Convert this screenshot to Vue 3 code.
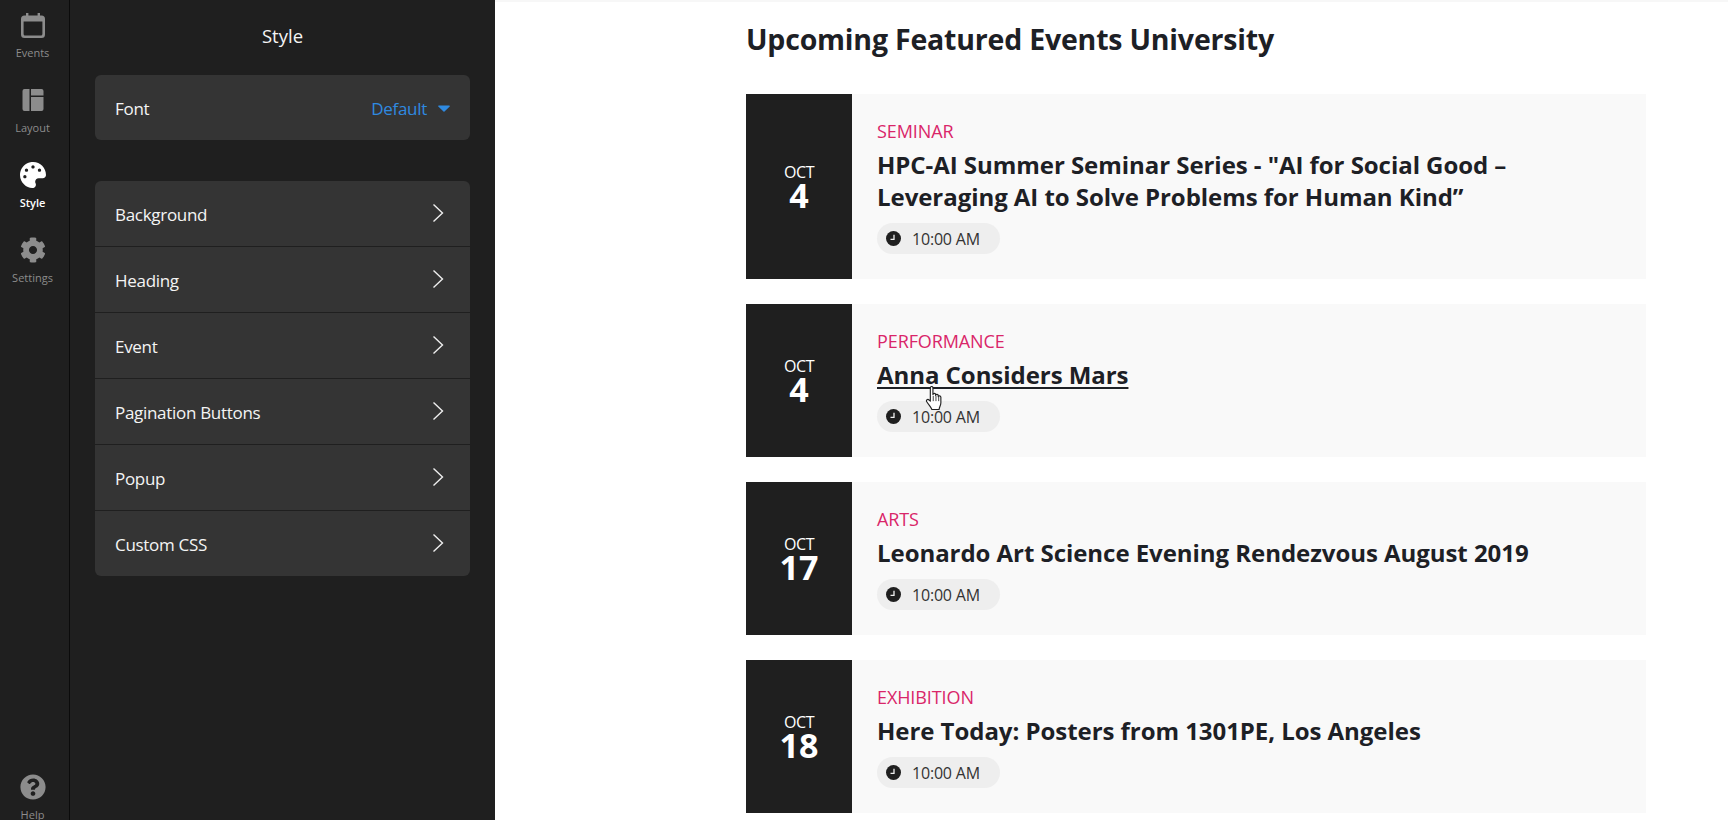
<script setup>
const rail = [
  { label: 'Events', icon: 'cal' },
  { label: 'Layout', icon: 'layout' },
  { label: 'Style', icon: 'palette', active: true },
  { label: 'Settings', icon: 'gear' }
]
const rows = ['Background', 'Heading', 'Event', 'Pagination Buttons', 'Popup', 'Custom CSS']
const events = [
  { cat: 'SEMINAR', day: '4', title: 'HPC-AI Summer Seminar Series - "AI for Social Good – Leveraging AI to Solve Problems for Human Kind”' },
  { cat: 'PERFORMANCE', day: '4', title: 'Anna Considers Mars', hover: true },
  { cat: 'ARTS', day: '17', title: 'Leonardo Art Science Evening Rendezvous August 2019' },
  { cat: 'EXHIBITION', day: '18', title: 'Here Today: Posters from 1301PE, Los Angeles' }
]
</script>

<template>
  <div class="app">
    <nav class="rail">
      <div v-for="r in rail" :key="r.label" class="rail-item" :class="{ active: r.active }">
        <svg v-if="r.icon === 'cal'" class="ri" viewBox="0 0 26 26">
          <path fill="currentColor" fill-rule="evenodd" d="M6 1h2.400v2.400h9.200V1H20v2.400h1.500A3.500 3.500 0 0 1 25 6.900v15.600a3.500 3.500 0 0 1-3.500 3.500h-17A3.500 3.500 0 0 1 1 22.500V6.900a3.500 3.500 0 0 1 3.500-3.500H6zM3.600 9.500v12.400c0 .8.600 1.500 1.400 1.500h16c.8 0 1.400-.7 1.400-1.500V9.500z" />
        </svg>
        <svg v-else-if="r.icon === 'layout'" class="ri" viewBox="0 0 26 26">
          <path fill="currentColor" d="M4.500 2H9.500V24H4.500A2 2 0 0 1 2.500 22V4A2 2 0 0 1 4.500 2zM11 2H21.500A2 2 0 0 1 23.500 4V8.500H11zM11 10H23.500V22A2 2 0 0 1 21.500 24H11z" />
        </svg>
        <svg v-else-if="r.icon === 'palette'" class="ri" viewBox="0 0 512 512">
          <path fill="currentColor" d="M204.300 5C104.900 24.400 24.800 104.300 5.200 203.400c-37 187 131.700 326.400 258.800 306.700 41.200-6.400 61.400-54.600 42.500-91.700-23.100-45.400 9.900-98.400 60.900-98.400h79.700c35.800 0 64.800-29.600 64.900-65.300C511.500 97.100 368.100-26.900 204.300 5zM96 320c-17.700 0-32-14.300-32-32s14.300-32 32-32 32 14.300 32 32-14.300 32-32 32zm32-128c-17.700 0-32-14.300-32-32s14.300-32 32-32 32 14.300 32 32-14.300 32-32 32zm128-64c-17.700 0-32-14.300-32-32s14.300-32 32-32 32 14.300 32 32-14.300 32-32 32zm128 64c-17.700 0-32-14.300-32-32s14.300-32 32-32 32 14.300 32 32-14.300 32-32 32z" />
        </svg>
        <svg v-else class="ri" viewBox="0 0 512 512">
          <path fill="currentColor" d="M487.400 315.700l-42.600-24.600c4.300-23.200 4.300-47 0-70.200l42.600-24.600c4.900-2.800 7.100-8.600 5.500-14-11.100-35.600-30-67.800-54.700-94.600-3.800-4.100-10-5.100-14.800-2.300L380.800 110c-17.900-15.400-38.500-27.300-60.800-35.100V25.800c0-5.600-3.900-10.500-9.400-11.700-36.700-8.200-74.300-7.800-109.200 0-5.500 1.200-9.400 6.100-9.400 11.700V75c-22.200 7.900-42.800 19.800-60.800 35.100L88.700 85.500c-4.900-2.800-11-1.900-14.800 2.300-24.700 26.700-43.600 58.900-54.700 94.600-1.700 5.400.6 11.200 5.500 14L67.300 221c-4.300 23.200-4.300 47 0 70.200l-42.600 24.600c-4.900 2.800-7.100 8.600-5.500 14 11.100 35.600 30 67.800 54.700 94.600 3.800 4.100 10 5.100 14.800 2.300l42.600-24.600c17.900 15.400 38.500 27.300 60.800 35.100v49.200c0 5.600 3.900 10.500 9.400 11.700 36.700 8.200 74.300 7.800 109.200 0 5.500-1.200 9.400-6.100 9.400-11.700v-49.200c22.200-7.900 42.800-19.800 60.800-35.100l42.600 24.600c4.900 2.800 11 1.900 14.800-2.300 24.700-26.700 43.600-58.900 54.700-94.600 1.500-5.500-.7-11.300-5.600-14.100zM256 336c-44.100 0-80-35.900-80-80s35.900-80 80-80 80 35.900 80 80-35.900 80-80 80z" />
        </svg>
        <span class="rl">{{ r.label }}</span>
      </div>
      <div class="rail-item help">
        <svg class="ri" viewBox="0 0 512 512">
          <path fill="currentColor" d="M504 256c0 136.997-111.043 248-248 248S8 392.997 8 256C8 119.083 119.043 8 256 8s248 111.083 248 248zM262.655 90c-54.497 0-89.255 22.957-116.549 63.758-3.536 5.286-2.353 12.415 2.715 16.258l34.699 26.310c5.205 3.947 12.621 3.008 16.665-2.122 17.864-22.658 30.113-35.797 57.303-35.797 20.429 0 45.698 13.148 45.698 32.958 0 14.976-12.363 22.667-32.534 33.976C247.128 238.528 216 254.941 216 296v4c0 6.627 5.373 12 12 12h56c6.627 0 12-5.373 12-12v-1.333c0-28.462 83.186-29.647 83.186-106.667 0-58.002-60.165-102-116.531-102zM256 338c-25.365 0-46 20.635-46 46 0 25.364 20.635 46 46 46s46-20.636 46-46c0-25.365-20.635-46-46-46z" />
        </svg>
        <span class="rl">Help</span>
      </div>
    </nav>

    <aside class="panel">
      <h2 class="panel-title">Style</h2>
      <div class="group">
        <div class="row">
          <span>Font</span>
          <span class="font-val">Default
            <svg class="caret" viewBox="0 0 12 7"><path fill="currentColor" d="M.8.500h10.400c.6 0 .9.700.5 1.100L6.500 6.500a.7.700 0 0 1-1 0L.3 1.600C-.1 1.200.2.500.8.500z" /></svg>
          </span>
        </div>
      </div>
      <div class="group second">
        <div v-for="r in rows" :key="r" class="row divided">
          <span>{{ r }}</span>
          <svg class="chev" viewBox="0 0 12 20"><path d="M1.500 1.500L10.500 10L1.500 18.500" fill="none" stroke="currentColor" stroke-width="1.400" /></svg>
        </div>
      </div>
    </aside>

    <main class="main">
      <h1 class="heading">Upcoming Featured Events University</h1>
      <div class="list">
        <article v-for="e in events" :key="e.title" class="card">
          <div class="date">
            <span class="month">OCT</span>
            <span class="day">{{ e.day }}</span>
          </div>
          <div class="body">
            <div class="cat">{{ e.cat }}</div>
            <div class="title" :class="{ hover: e.hover }"><span class="title-text">{{ e.title }}</span>
              <svg v-if="e.hover" class="hand" viewBox="0 0 18 23">
                <path d="M5 1.800c0-1.700 2.500-1.700 2.500 0v6.400c.2-1.600 2.600-1.500 2.600.2v.6c.3-1.400 2.500-1.200 2.500.4v.8c.4-1.200 2.500-1 2.500.7v5.100c0 2.800-1.400 3.600-1.700 6.500H6.500c-.6-2-2.800-4.200-4.900-7.400-1-1.700.9-3 2.200-1.700L5 14.500z" fill="#fff" stroke="#222" stroke-width="1.100" stroke-linejoin="round" />
                <path d="M7.800 9.500v5M10.400 9.500v5M13 10.500v4" fill="none" stroke="#222" stroke-width=".8" />
              </svg>
            </div>
            <div class="time">
              <svg class="clock" viewBox="0 0 15 15"><circle cx="7.500" cy="7.500" r="7.500" fill="#1f1f1f" /><path d="M8 3.800V8.300H4.500" fill="none" stroke="#f0f0f0" stroke-width="1.300" /></svg>
              <span>10:00 AM</span>
            </div>
          </div>
        </article>
      </div>
    </main>
  </div>
</template>

<style>
html, body { margin: 0; background: #fff; }
</style>

<style scoped>
.app {
  display: flex;
  width: 1728px;
  height: 820px;
  overflow: hidden;
  font-family: "Open Sans", "Noto Sans", sans-serif;
  background: #fff;
}
.rail {
  box-sizing: border-box;
  width: 70px;
  flex: none;
  height: 820px;
  display: flex;
  flex-direction: column;
  background: #1f1f1f;
  border-right: 1px solid #0b0b0b;
  padding: 12px 4px 0 0;
  overflow: hidden;
}
.rail-item {
  height: 75px;
  flex: none;
  display: flex;
  flex-direction: column;
  align-items: center;
  color: #8c8c8c;
}
.rail-item.active { color: #fff; }
.rail-item.active .rl { font-weight: 600; }
.help { margin-top: auto; margin-bottom: -29px; }
.ri { width: 26px; height: 26px; display: block; }
.rl { font-size: 11px; line-height: 15px; margin-top: 7px; }
.panel {
  box-sizing: border-box;
  width: 425px;
  flex: none;
  height: 820px;
  background: #1f1f1f;
  padding: 0 25px;
  color: #f4f4f4;
}
.panel-title {
  margin: 0;
  height: 75px;
  line-height: 72px;
  font-size: 18.500px;
  font-weight: 400;
  text-align: center;
}
.group {
  background: #343434;
  border-radius: 6px;
  overflow: hidden;
}
.second { margin-top: 41px; }
.row {
  box-sizing: border-box;
  height: 65px;
  display: flex;
  align-items: center;
  justify-content: space-between;
  padding: 1px 20px 0;
  font-size: 17px;
  letter-spacing: -.3px;
}
.divided { height: 66px; border-bottom: 1px solid #1f1f1f; }
.divided:last-child { height: 65px; border-bottom: 0; }
.font-val {
  display: flex;
  align-items: center;
  gap: 11px;
  color: #2f8ae0;
}
.caret { width: 12px; height: 7px; display: block; }
.chev { width: 12px; height: 20px; margin: -2px 6px 0 0; color: #eee; display: block; }
.main {
  flex: 1;
  min-width: 0;
  box-sizing: border-box;
  height: 820px;
  padding: 0 82px 0 251px;
  border-top: 2px solid #f7f7f7;
}
.heading {
  margin: 0;
  padding-top: 18px;
  font-size: 28.500px;
  line-height: 38px;
  font-weight: 700;
  color: #1d2025;
  letter-spacing: -.2px;
}
.list {
  margin-top: 36px;
  display: flex;
  flex-direction: column;
  gap: 25px;
}
.card {
  display: flex;
  background: #f9f9f9;
}
.date {
  width: 106px;
  flex: none;
  background: #1f1f1f;
  color: #fff;
  display: flex;
  flex-direction: column;
  align-items: center;
  justify-content: center;
}
.month { margin-top: 1px; font-size: 16px; line-height: 17px; letter-spacing: -.4px; }
.day { margin-top: -1px; font-size: 34px; line-height: 31px; font-weight: 700; }
.body {
  flex: 1;
  min-width: 0;
  padding: 25px;
}
.cat {
  color: #d92669;
  font-size: 18px;
  line-height: 24px;
  letter-spacing: -.1px;
}
.title {
  position: relative;
  margin-top: 6px;
  font-size: 24px;
  line-height: 32px;
  font-weight: 700;
  color: #1d2025;
  letter-spacing: -.05px;
}
.title.hover .title-text { text-decoration: underline; text-underline-offset: 3px; text-decoration-thickness: 2px; }
.hand {
  position: absolute;
  left: 48px;
  top: 27px;
  width: 19px;
  height: 24px;
}
.time {
  display: inline-flex;
  align-items: center;
  gap: 11px;
  margin-top: 10px;
  height: 31px;
  padding: 0 20px 0 9px;
  background: #eeeeee;
  border-radius: 16px;
  color: #333;
  font-size: 16px;
  letter-spacing: -.2px;
}
.clock { width: 15px; height: 15px; display: block; flex: none; }
</style>
